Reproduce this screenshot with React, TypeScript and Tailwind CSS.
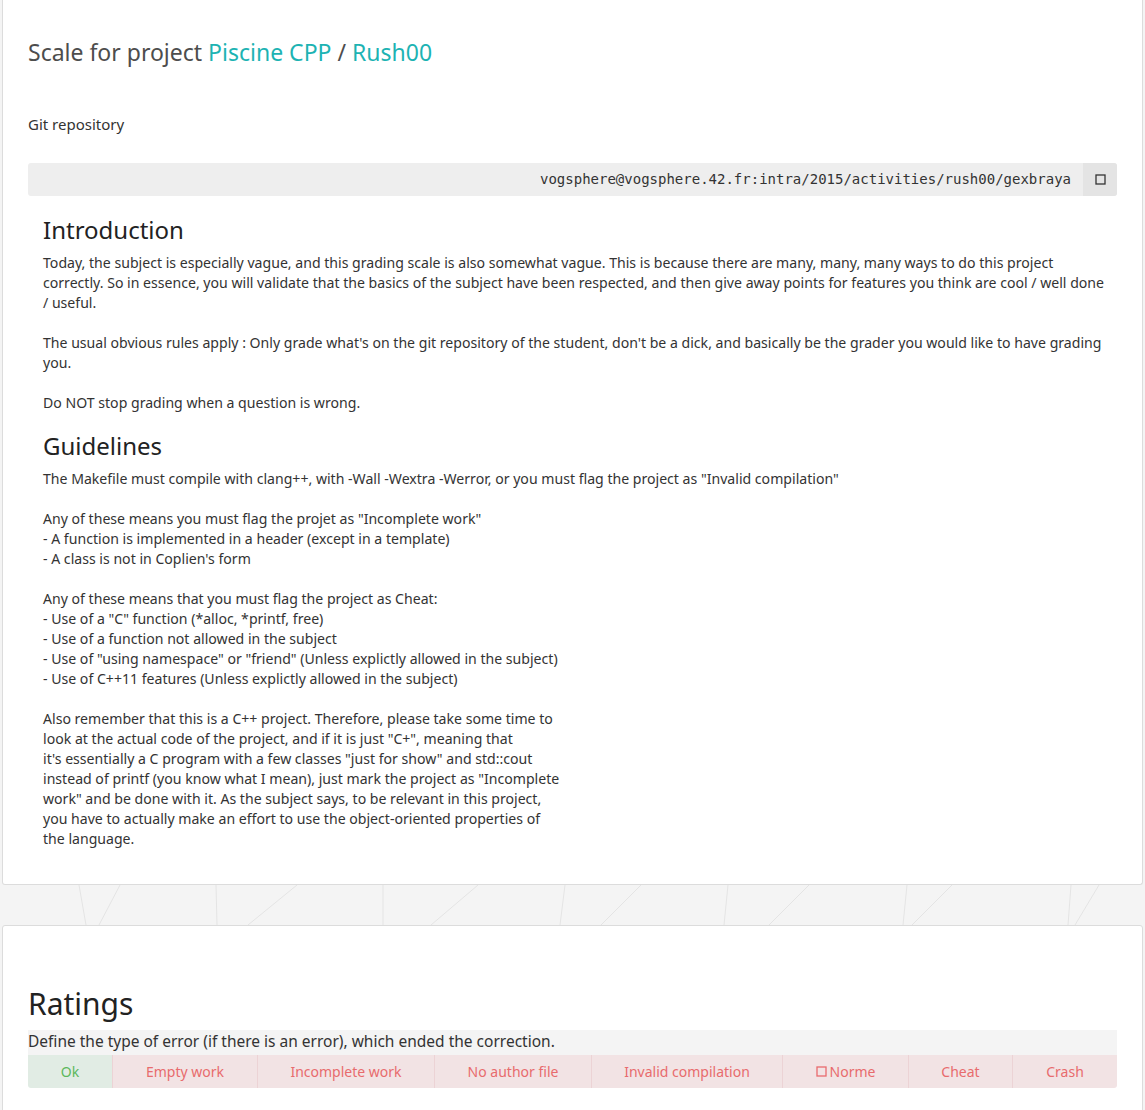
import React from "react";

const intro: string[][] = [
  [
    "Today, the subject is especially vague, and this grading scale is also somewhat vague. This is because there are many, many, many ways to do this project",
    "correctly. So in essence, you will validate that the basics of the subject have been respected, and then give away points for features you think are cool / well done",
    "/ useful.",
  ],
  [
    "The usual obvious rules apply : Only grade what's on the git repository of the student, don't be a dick, and basically be the grader you would like to have grading",
    "you.",
  ],
  ["Do NOT stop grading when a question is wrong."],
];

const guidelines: string[][] = [
  ['The Makefile must compile with clang++, with -Wall -Wextra -Werror, or you must flag the project as "Invalid compilation"'],
  [
    'Any of these means you must flag the projet as "Incomplete work"',
    "- A function is implemented in a header (except in a template)",
    "- A class is not in Coplien's form",
  ],
  [
    "Any of these means that you must flag the project as Cheat:",
    '- Use of a "C" function (*alloc, *printf, free)',
    "- Use of a function not allowed in the subject",
    '- Use of "using namespace" or "friend" (Unless explictly allowed in the subject)',
    "- Use of C++11 features (Unless explictly allowed in the subject)",
  ],
  [
    "Also remember that this is a C++ project. Therefore, please take some time to",
    'look at the actual code of the project, and if it is just "C+", meaning that',
    'it\'s essentially a C program with a few classes "just for show" and std::cout',
    'instead of printf (you know what I mean), just mark the project as "Incomplete',
    'work" and be done with it. As the subject says, to be relevant in this project,',
    "you have to actually make an effort to use the object-oriented properties of",
    "the language.",
  ],
];

const ratings = [
  { label: "Ok", w: "w-[84px]", ok: true },
  { label: "Empty work", w: "w-[145px]" },
  { label: "Incomplete work", w: "w-[177px]" },
  { label: "No author file", w: "w-[157px]" },
  { label: "Invalid compilation", w: "w-[191px]" },
  { label: "Norme", w: "w-[126px]", icon: true },
  { label: "Cheat", w: "w-[104px]" },
  { label: "Crash", w: "flex-1" },
];

const gapLines = [
  [79, 86], [120, 99], [216, 217], [297, 248], [383, 383], [478, 431], [565, 560],
  [641, 601], [728, 724], [809, 769], [907, 903], [952, 912], [1071, 1068], [1099, 1075],
];

function Paragraphs({ items }: { items: string[][] }) {
  return (
    <div className="text-[14.1px] leading-[20px] text-[#333]">
      {items.map((p, i) => (
        <div key={i} className={i > 0 ? "mt-[20px]" : ""}>
          {p.map((line, j) => (
            <div key={j}>{line}</div>
          ))}
        </div>
      ))}
    </div>
  );
}

function Square() {
  return (
    <svg width="11" height="11" viewBox="0 0 11 11">
      <rect x="1" y="1" width="9" height="9" fill="none" stroke="currentColor" strokeWidth="1.3" />
    </svg>
  );
}

export default function App() {
  return (
    <div className="min-h-[1110px] bg-[#f4f4f4] px-[2px] font-['Noto_Sans','Open_Sans',sans-serif]">
      <div className="bg-white border border-t-0 border-[#dcdcdc] rounded-b-[3px] pl-[25px] pr-[25px] pt-[36px] pb-[35px]">
        <h1 className="text-[23px] leading-[32px] text-[#4d4d4d]">
          Scale for project <span className="text-[#1db3b3]">Piscine CPP</span> /{" "}
          <span className="text-[#1db3b3]">Rush00</span>
        </h1>
        <div className="mt-[46px] text-[15px] leading-[20px] text-[#333]">Git repository</div>
        <div className="mt-[29px] flex h-[33px] bg-[#eeeeee] rounded-[3px] overflow-hidden">
          <div className="flex-1 flex items-center justify-end pr-[12px] font-['DejaVu_Sans_Mono',monospace] text-[14px] text-[#333]">
            vogsphere@vogsphere.42.fr:intra/2015/activities/rush00/gexbraya
          </div>
          <div className="w-[34px] bg-[#e4e4e4] flex items-center justify-center text-[#333]">
            <Square />
          </div>
        </div>
        <div className="pl-[15px]">
          <h2 className="mt-[18px] text-[24px] leading-[32px] text-[#222]">Introduction</h2>
          <div className="mt-[7px]">
            <Paragraphs items={intro} />
          </div>
          <h2 className="mt-[17px] text-[24px] leading-[32px] text-[#222]">Guidelines</h2>
          <div className="mt-[7px]">
            <Paragraphs items={guidelines} />
          </div>
        </div>
      </div>

      <svg width="1141" height="40" viewBox="0 0 1141 40" className="block">
        {gapLines.map(([a, b], i) => (
          <line key={i} x1={a - 2} y1="0" x2={b - 2} y2="40" stroke="#e4e4e4" strokeWidth="1" />
        ))}
      </svg>

      <div className="bg-white border border-[#dcdcdc] rounded-[3px] px-[25px] pt-[60px] pb-[30px]">
        <h2 className="text-[30px] leading-[36px] text-[#222]">Ratings</h2>
        <div className="mt-[8px] h-[25px] bg-[#f4f4f4] text-[15.5px] leading-[22px] text-[#333]">
          Define the type of error (if there is an error), which ended the correction.
        </div>
        <div className="flex h-[33px] rounded-b-[3px] overflow-hidden text-[14px]">
          {ratings.map((r, i) => (
            <div
              key={i}
              className={`${r.w} flex items-center justify-center gap-[3px] ${
                r.ok ? "bg-[#e1ece4] text-[#5cb85c]" : "bg-[#f2e3e4] text-[#e86b6d] border-l border-[#ecd3d5]"
              }`}
            >
              {r.icon && <Square />}
              {r.label}
            </div>
          ))}
        </div>
      </div>
    </div>
  );
}
